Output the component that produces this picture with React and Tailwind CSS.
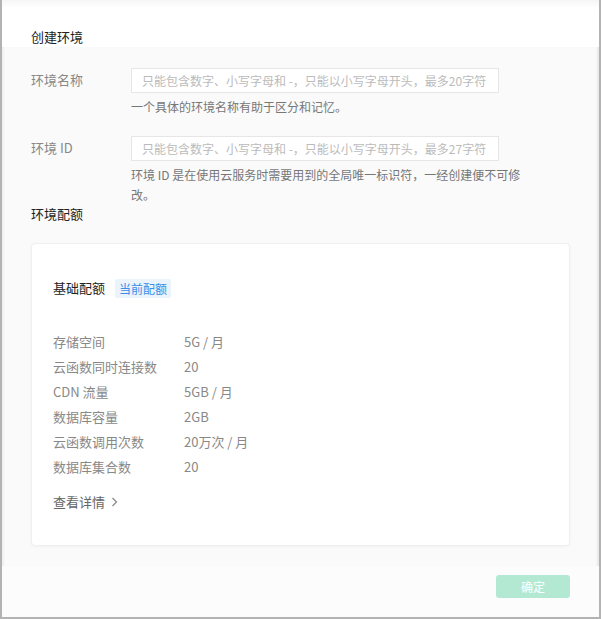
import React from 'react';

const quotas = [
  { label: '存储空间', value: '5G / 月' },
  { label: '云函数同时连接数', value: '20' },
  { label: 'CDN 流量', value: '5GB / 月' },
  { label: '数据库容量', value: '2GB' },
  { label: '云函数调用次数', value: '20万次 / 月' },
  { label: '数据库集合数', value: '20' },
];

function Field({ label, placeholder, help }) {
  return (
    <div className="flex">
      <div className="w-[100px] shrink-0 pt-[4px] text-[13px] leading-[18px] text-[#888]">{label}</div>
      <div className="w-[392px]">
        <input
          placeholder={placeholder}
          className="h-[25px] w-[368px] border border-[#e6e6e6] bg-white px-[10px] text-[12px] outline-none placeholder:text-[#bbb]"
        />
        <p className="mt-[4px] text-[12px] leading-[20px] text-[#777]">{help}</p>
      </div>
    </div>
  );
}

export default function App() {
  return (
    <div
      className="flex h-[619px] w-[601px] flex-col border-x-2 border-b-2 border-[#b3b3b3] bg-[#fafafa]"
      style={{ fontFamily: '"Noto Sans CJK SC", "Noto Sans", sans-serif' }}
    >
      <div className="flex h-[47px] shrink-0 items-end bg-white px-[29px] pb-0 shadow-[inset_0_10px_8px_-8px_rgba(0,0,0,0.06)]">
        <h2 className="text-[13px] leading-[20px] text-[#222]">创建环境</h2>
      </div>

      <div className="flex-1 px-[29px] pt-[20px] shadow-[inset_-3px_0_3px_-2px_rgba(0,0,0,0.12),inset_3px_0_3px_-2px_rgba(0,0,0,0.08)]">
        <Field
          label="环境名称"
          placeholder="只能包含数字、小写字母和 -，只能以小写字母开头，最多20字符"
          help="一个具体的环境名称有助于区分和记忆。"
        />
        <div className="mt-[18px]">
          <Field
            label="环境 ID"
            placeholder="只能包含数字、小写字母和 -，只能以小写字母开头，最多27字符"
            help="环境 ID 是在使用云服务时需要用到的全局唯一标识符，一经创建便不可修改。"
          />
        </div>

        <h3 className="text-[13px] leading-[18px] text-[#222]">环境配额</h3>

        <div className="mt-[20px] h-[303px] rounded-[4px] border border-[#f0f0f0] bg-white px-[21px] pt-[34px] shadow-[0_1px_3px_rgba(0,0,0,0.04)]">
          <div className="flex items-center gap-[10px]">
            <span className="text-[13px] leading-[20px] text-[#222]">基础配额</span>
            <span className="rounded-[2px] bg-[#ebf3fd] px-[4px] text-[12px] leading-[19px] text-[#3a8ee6]">当前配额</span>
          </div>

          <div className="mt-[31px] flex flex-col">
            {quotas.map((q) => (
              <div key={q.label} className="flex h-[25px] items-center text-[13px] text-[#888]">
                <span className="w-[131px] shrink-0">{q.label}</span>
                <span>{q.value}</span>
              </div>
            ))}
          </div>

          <div className="mt-[13px] flex items-center gap-[6px] text-[13px] leading-[20px] text-[#666]">
            <span>查看详情</span>
            <svg width="7" height="10" viewBox="0 0 7 10" fill="none">
              <path d="M1.5 1l4 4-4 4" stroke="#888" strokeWidth="1.2" />
            </svg>
          </div>
        </div>
      </div>

      <div className="flex h-[51px] shrink-0 items-start justify-end bg-[#fcfcfc] px-[29px] pt-[9px]">
        <button className="h-[23px] w-[74px] rounded-[3px] bg-[#b3e9d3] text-[12px] text-white">确定</button>
      </div>
    </div>
  );
}
